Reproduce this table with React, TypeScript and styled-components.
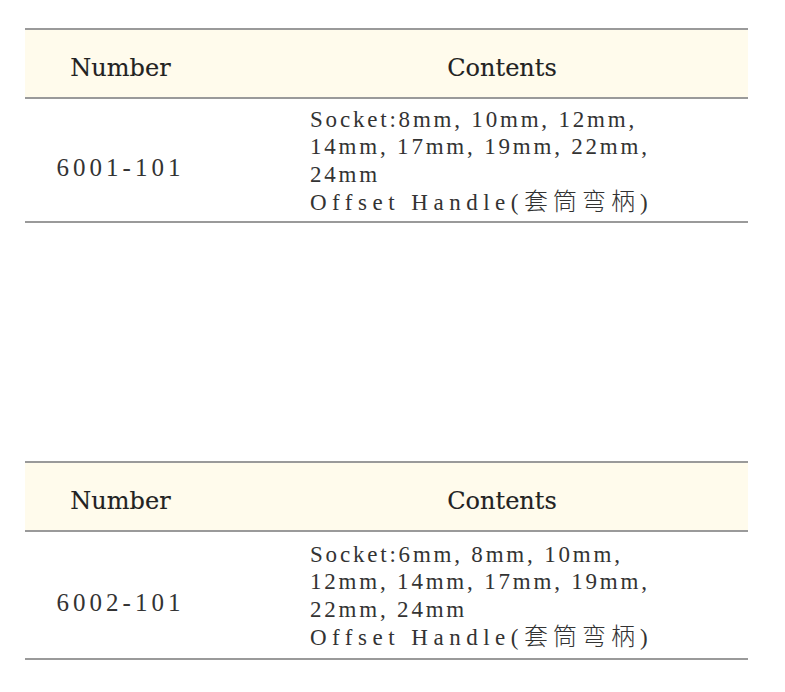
import React from 'react';
import styled, { createGlobalStyle } from 'styled-components';

const GlobalStyle = createGlobalStyle`
    body {
        margin: 0;
        background: #ffffff;
    }
`;

const Page = styled.div`
    width: 785px;
    padding: 28px 0 0 25px;
    box-sizing: border-box;
`;

const Table = styled.div<{ $gap?: number }>`
    width: 723px;
    margin-top: ${(p) => p.$gap || 0}px;
    border-top: 2px solid #9a9a9a;
`;

const HeaderRow = styled.div`
    display: grid;
    grid-template-columns: 231px 1fr;
    height: 67px;
    background: #fffbec;
    border-bottom: 2px solid #9a9a9a;
    align-items: center;
`;

const HeaderCell = styled.div<{ $shift?: number }>`
    font-family: "DejaVu Serif", "Liberation Serif", serif;
    font-size: 24px;
    color: #222222;
    text-align: center;
    padding-top: 8px;
    padding-right: ${(p) => p.$shift || 0}px;
    -webkit-text-stroke: 0.15px #222222;
`;

const BodyRow = styled.div<{ $height: number }>`
    display: grid;
    grid-template-columns: 231px 1fr;
    height: ${(p) => p.$height}px;
    border-bottom: 2px solid #9a9a9a;
    align-items: center;
`;

const NumberCell = styled.div`
    font-family: "Liberation Serif", serif;
    font-size: 25px;
    letter-spacing: 4px;
    color: #333333;
    text-align: center;
    padding-right: 40px;
    padding-top: 16px;
`;

const ContentsCell = styled.div`
    font-family: "Liberation Serif", "Noto Sans CJK SC", serif;
    font-size: 23px;
    line-height: 27.5px;
    color: #333333;
    padding-left: 54px;
    padding-top: 2px;
`;

const Line = styled.div<{ $spacing?: number }>`
    white-space: nowrap;
    letter-spacing: ${(p) => p.$spacing ?? 2.8}px;
`;

const Cjk = styled.span`
    font-family: "Noto Sans CJK SC", sans-serif;
    font-size: 24px;
    font-weight: 300;
    line-height: 1;
    letter-spacing: 5px;
`;

type Item = {
    number: string;
    lines: string[];
    height: number;
    gap: number;
};

const items: Item[] = [
    {
        number: '6001-101',
        lines: ['Socket:8mm, 10mm, 12mm,', '14mm, 17mm, 19mm, 22mm,', '24mm'],
        height: 122,
        gap: 0,
    },
    {
        number: '6002-101',
        lines: ['Socket:6mm, 8mm, 10mm,', '12mm, 14mm, 17mm, 19mm,', '22mm, 24mm'],
        height: 126,
        gap: 238,
    },
];

const App: React.FC = () => {
    return (
        <Page>
            <GlobalStyle />
            {items.map((item) => (
                <Table key={item.number} $gap={item.gap}>
                    <HeaderRow>
                        <HeaderCell $shift={40}>Number</HeaderCell>
                        <HeaderCell>Contents</HeaderCell>
                    </HeaderRow>
                    <BodyRow $height={item.height}>
                        <NumberCell>{item.number}</NumberCell>
                        <ContentsCell>
                            {item.lines.map((l) => (
                                <Line key={l}>{l}</Line>
                            ))}
                            <Line $spacing={5.5}>
                                Offset Handle(<Cjk>套筒弯柄</Cjk>)
                            </Line>
                        </ContentsCell>
                    </BodyRow>
                </Table>
            ))}
        </Page>
    );
};

export default App;
